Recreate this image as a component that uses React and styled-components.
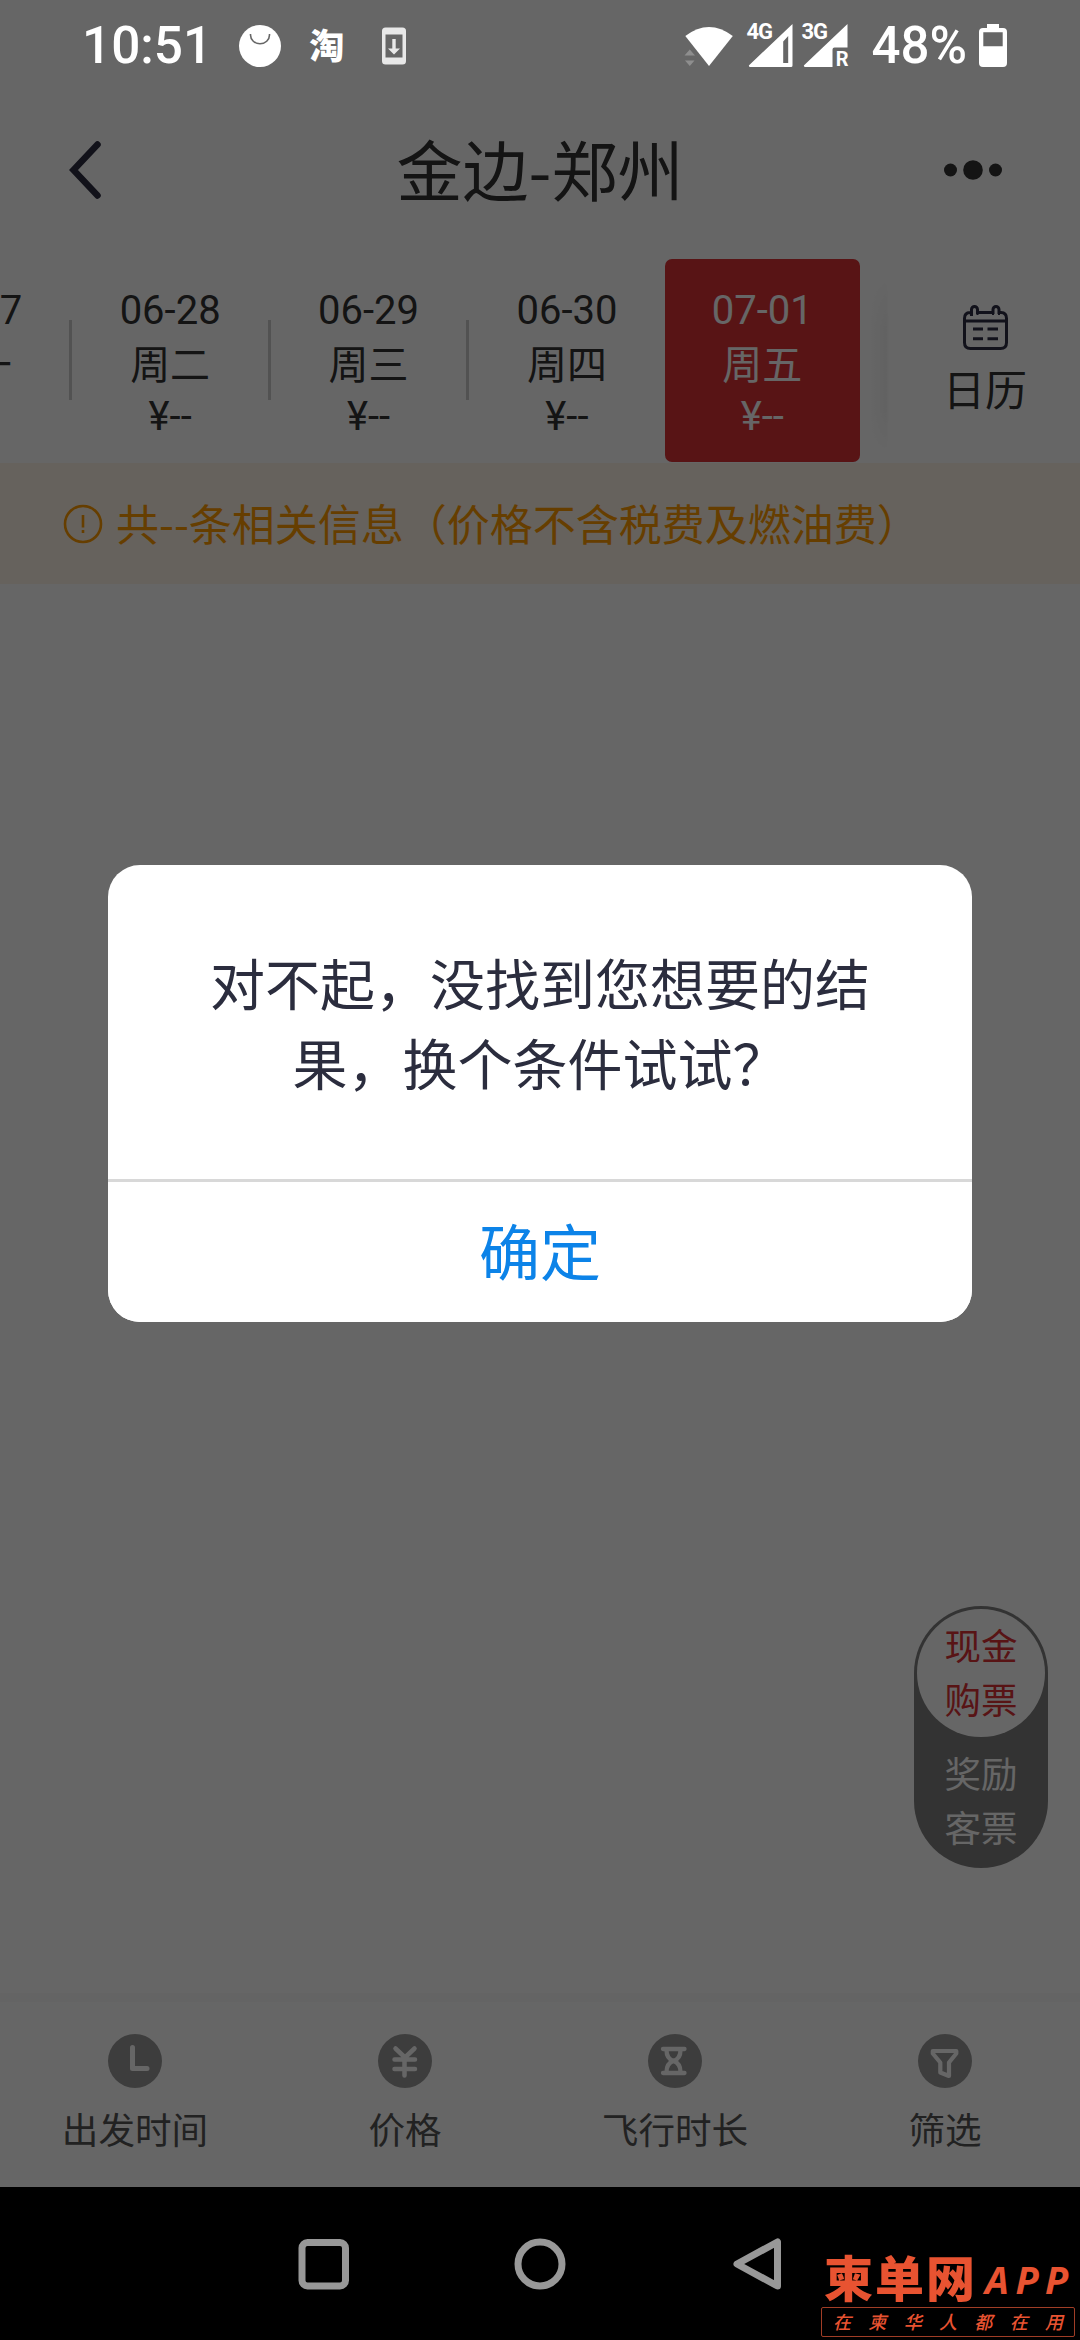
import React from "react";
import styled, { createGlobalStyle } from "styled-components";

const GlobalStyle = createGlobalStyle`
  * {
    box-sizing: border-box;
  }
  body {
    margin: 0;
    background: #000;
  }
`;

const cjk = `"Noto Sans CJK SC", sans-serif`;
const mixed = `Roboto, "Noto Sans CJK SC", sans-serif`;

const Phone = styled.div`
  position: relative;
  display: flex;
  flex-direction: column;
  width: 1080px;
  height: 2340px;
  overflow: hidden;
  background: #fff;
  color: #333;
  font-family: ${cjk};
  svg {
    display: block;
    flex: none;
    overflow: visible;
  }
`;

/* status bar */

const StatusBar = styled.div`
  position: relative;
  z-index: 2;
  display: flex;
  align-items: center;
  height: 88px;
  padding: 3px 73px 0 82px;
  color: #fff;
`;

const StatusText = styled.span`
  font: 500 ${(p) => p.$size || 51}px/60px Roboto, sans-serif;
  margin-left: ${(p) => p.$left || 0}px;
`;

const StatusIcons = styled.div`
  display: flex;
  align-items: center;
  margin-left: ${(p) => p.$left};
`;

const AppGlyph = styled.span`
  margin: 0 38px 4px 28px;
  font: 900 35px/40px ${cjk};
`;

const Signal = styled.div`
  display: grid;
  width: 47px;
  height: 44px;
  margin-left: ${(p) => p.$left}px;
  > * {
    grid-area: 1 / 1;
  }
`;

const SignalLabel = styled.span`
  align-self: ${(p) => (p.$end ? "end" : "start")};
  justify-self: ${(p) => (p.$end ? "end" : "start")};
  margin-top: -5px;
  margin-bottom: -4px;
  font: 700 ${(p) => (p.$end ? 20 : 22)}px/26px Roboto, sans-serif;
  letter-spacing: ${(p) => (p.$end ? 0 : -1)}px;
`;

/* page header */

const Header = styled.header`
  display: grid;
  grid-template-columns: 1fr auto 1fr;
  align-items: center;
  height: 164px;
  padding: 0 77px 0 68px;
  > :last-child {
    justify-self: end;
  }
`;

const Title = styled.h1`
  margin: 0 0 7px;
  padding-left: 9px;
  font-size: 66px;
  font-weight: 400;
  line-height: 80px;
`;

/* date strip */

const Strip = styled.div`
  display: flex;
  height: 211px;
  padding-top: 7px;
`;

const Days = styled.div`
  display: flex;
  width: 860px;
  overflow: hidden;
  justify-content: flex-end;
`;

const Day = styled.div`
  display: flex;
  flex: none;
  flex-direction: column;
  align-items: center;
  width: 195.4px;
  height: 203px;
  padding-top: 27px;
  border-radius: 7px;
  font: 400 40px/50px ${mixed};
  background: ${(p) => (p.$active ? "#dc3236" : "transparent")};
  color: ${(p) => (p.$active ? "#fff" : "#333")};
  span:nth-child(2) {
    padding-top: 4px;
    line-height: 52px;
  }
`;

const Divider = styled.i`
  flex: none;
  width: 3px;
  height: 80px;
  margin-top: 61px;
  background: #ccc;
`;

const StripShade = styled.i`
  width: 29px;
  height: 180px;
  margin-top: 16px;
  background: linear-gradient(90deg, #fff 30%, #f5f5f5 90%, #fff);
  mask-image: linear-gradient(transparent, #000 30%, #000 75%, transparent);
`;

const CalendarButton = styled.div`
  display: flex;
  flex: 1;
  flex-direction: column;
  align-items: center;
  padding: 46px 0 0 1px;
  font-size: 42px;
  line-height: 52px;
  svg {
    margin-bottom: 12px;
  }
`;

const Notice = styled.div`
  display: flex;
  align-items: center;
  gap: 13px;
  height: 121px;
  padding-left: 63px;
  background: #fff4e9;
  color: #ff9c00;
  font-size: 43px;
  line-height: 60px;
`;

const NoticeText = styled.span`
  margin-bottom: 4px;
`;

const Results = styled.main`
  flex: 1;
`;

/* floating ticket switch */

const TicketSwitch = styled.div`
  position: absolute;
  top: 1606px;
  right: 32px;
  display: flex;
  flex-direction: column;
  width: 134px;
  height: 262px;
  padding: 3px;
  border-radius: 67px;
  background: #808080;
`;

const TicketOption = styled.div`
  display: flex;
  flex-direction: column;
  align-items: center;
  justify-content: center;
  height: 128px;
  padding-bottom: 3px;
  border-radius: 50%;
  font-size: 36.5px;
  line-height: 54px;
  background: ${(p) => (p.$active ? "#fff" : "transparent")};
  color: ${(p) => (p.$active ? "#dc3236" : "#fff")};
`;

/* bottom filters */

const FilterBar = styled.footer`
  display: grid;
  grid-template-columns: repeat(4, 1fr);
  height: 194px;
  border-top: 9px solid #fbfbfb;
`;

const Filter = styled.div`
  display: flex;
  flex-direction: column;
  align-items: center;
  padding-top: 32px;
  color: #555;
  font-size: 36.6px;
  line-height: 50px;
  svg {
    margin-bottom: 16px;
  }
`;

const NavBar = styled.nav`
  display: flex;
  align-items: center;
  justify-content: space-between;
  height: 153px;
  padding: 0 297px;
  background: #000;
`;

/* dialog */

const Mask = styled.div`
  position: absolute;
  inset: 0 0 153px;
  display: flex;
  align-items: center;
  justify-content: center;
  background: rgba(0, 0, 0, 0.6);
`;

const Dialog = styled.div`
  width: 864px;
  height: 457px;
  overflow: hidden;
  border-radius: 32px;
  background: #fff;
`;

const Message = styled.p`
  height: 314px;
  margin: 0;
  padding: 76px 101px 0;
  color: #2b2d3e;
  font-size: 55px;
  line-height: 80px;
  text-align: center;
`;

const Confirm = styled.button`
  display: block;
  width: 100%;
  height: 143px;
  padding: 0 0 4px;
  border: 0;
  border-top: 3px solid #d8d8d8;
  background: #fff;
  color: #0c83e8;
  font: 400 61px/80px ${cjk};
`;

/* watermark */

const Watermark = styled.div`
  position: absolute;
  right: 5px;
  bottom: 3px;
  width: 254px;
  color: #e85331;
`;

const Brand = styled.div`
  display: flex;
  align-items: flex-start;
  gap: 8px;
  height: 58px;
  padding-left: 3px;
  white-space: nowrap;
  b {
    margin-top: -2px;
    font: 900 49px/58px ${cjk};
    letter-spacing: 2px;
  }
  em {
    margin-top: 1px;
    font: italic 700 38px/58px "Open Sans", sans-serif;
    letter-spacing: 6.5px;
  }
`;

const Slogan = styled.div`
  display: flex;
  justify-content: space-between;
  height: 30px;
  padding: 0 11px;
  border: 1px solid #a03d26;
  border-radius: 2px;
  font: italic 500 18px/27px ${cjk};
`;

const BagIcon = () => (
  <svg width="42" height="42" viewBox="0 0 42 42">
    <circle cx="21" cy="21" r="21" fill="#fff" />
    <path d="M11.5 9v1a9.5 8.8 0 0 0 19 0V9" fill="none" stroke="#666" strokeWidth="1.6" />
  </svg>
);

const UpdateIcon = () => (
  <svg width="24" height="38" viewBox="0 0 24 38">
    <rect width="24" height="37" y=".5" rx="3.5" fill="#e8e8e8" />
    <path d="M3.5 7.500h17v23h-17z" fill="#666" />
    <path d="M10.300 12h3.400v9.500h4.300l-6 6-6-6h4.300z" fill="#e8e8e8" />
  </svg>
);

const WifiIcon = () => (
  <svg width="48" height="44" viewBox="0 0 48 44">
    <path d="M.3 12Q24-6 47.800 12L24 42z" fill="#fff" />
    <path d="M-.5 31.500 4.800 25.500l5.200 6zM0 36.500h9.500L4.800 42z" fill="#8e8e8e" />
  </svg>
);

const SignalIcon = ({ label, roaming, left }) => (
  <Signal $left={left}>
    <svg width="47" height="44" viewBox="0 0 47 44">
      {roaming ? (
        <path d="M46.500 0v23.500h-13q-2 0-2 2V43H3.500L2.800 41.500z" fill="#fff" />
      ) : (
        <path
          d="M46.500 0v41.500q0 1.500-1.500 1.500H3.500L2.800 41.500zM37.200 17.500V39h5V12z"
          fill="#fff"
          fillRule="evenodd"
        />
      )}
    </svg>
    <SignalLabel>{label}</SignalLabel>
    {roaming && <SignalLabel $end>R</SignalLabel>}
  </Signal>
);

const BatteryIcon = () => (
  <svg width="28" height="44" viewBox="0 0 28 44">
    <path
      d="M8 0h12v4h4q4 0 4 4v31q0 4-4 4H4q-4 0-4-4V8q0-4 4-4h4zM4.300 8.200v14h19.400v-14z"
      fill="#fff"
      fillRule="evenodd"
    />
  </svg>
);

const BackIcon = () => (
  <svg width="34" height="60" viewBox="0 0 34 60">
    <path d="M29.500 4.500 5.500 30 29.500 55.500" fill="none" stroke="#2d2d41" strokeWidth="6.500" strokeLinecap="round" />
  </svg>
);

const MoreIcon = () => (
  <svg width="58" height="20" viewBox="0 0 58 20" fill="#333">
    <circle cx="5.500" cy="10" r="6.500" />
    <circle cx="28" cy="10" r="9.800" />
    <circle cx="50.500" cy="10" r="6.500" />
  </svg>
);

const CalendarIcon = () => (
  <svg width="45" height="45" viewBox="0 0 45 45" fill="none" stroke="#2d2d45" strokeWidth="3">
    <path d="M8.500 11V7.500H7q-5.500 0-5.500 6V37.500q0 6 6 6h30q6 0 6-6V13.500q0-6-5.500-6H36V4.500a3 3 0 0 0-6 0v3H14.500V4.500a3 3 0 0 0-6 0V8.500" />
    <path d="M14.500 7v3M30 7v3M36 7v3" strokeWidth="2" />
    <path d="M2 16h41M10 24h10M24.500 24h10.500M10 33.700h10M24.500 33.700h10.500" />
  </svg>
);

const AlertIcon = () => (
  <svg width="40" height="40" viewBox="0 0 40 40" fill="none" stroke="#ff9c00" strokeWidth="2.600">
    <circle cx="20" cy="20" r="18" />
    <path d="M20 11v12.500M20 26v3" />
  </svg>
);

const glyphs = {
  time: <path d="M24.500 13.500V34.500H39" strokeWidth="5" />,
  price: (
    <path d="M17.500 14.500 27 23.500l9.500-9M16.500 25.500H37M16.500 35H37M26.500 24v17.500" strokeWidth="4.500" />
  ),
  duration: (
    <path
      d="M15 15H36.500M15 39H36.500M18.500 16C18.500 22.500 21 25.500 25.500 27C21 28.500 18.500 32 18.500 38M32.500 16C32.500 22.500 30 25.500 25.500 27C30 28.500 32.500 32 32.500 38"
      strokeWidth="4.300"
    />
  ),
  filter: (
    <path d="M14.800 17H38.300V19.500L31 28.500V42L22.300 38.500V28.500L14.800 19.500z" strokeWidth="4.200" />
  ),
};

const FilterIcon = ({ name }) => (
  <svg width="54" height="54" viewBox="0 0 54 54">
    <circle cx="27" cy="27" r="27" fill="#999" />
    <g fill="none" stroke="#fff" strokeLinecap="round" strokeLinejoin="round">
      {glyphs[name]}
    </g>
  </svg>
);

const days = [
  { date: "06-27", week: "周一" },
  { date: "06-28", week: "周二" },
  { date: "06-29", week: "周三" },
  { date: "06-30", week: "周四" },
  { date: "07-01", week: "周五", active: true },
];

const filters = [
  { icon: "time", label: "出发时间" },
  { icon: "price", label: "价格" },
  { icon: "duration", label: "飞行时长" },
  { icon: "filter", label: "筛选" },
];

export default function App() {
  return (
    <Phone lang="zh-CN">
      <GlobalStyle />
      <StatusBar>
        <StatusText $size={51.3}>10:51</StatusText>
        <StatusIcons $left="27px">
          <BagIcon />
          <AppGlyph>淘</AppGlyph>
          <UpdateIcon />
        </StatusIcons>
        <StatusIcons $left="auto">
          <WifiIcon />
          <SignalIcon label="4G" left={13} />
          <SignalIcon label="3G" left={8} roaming />
          <StatusText $left={23}>48%</StatusText>
          <StatusIcons $left="12px">
            <BatteryIcon />
          </StatusIcons>
        </StatusIcons>
      </StatusBar>

      <Header>
        <BackIcon />
        <Title>金边-郑州</Title>
        <MoreIcon />
      </Header>

      <Strip>
        <Days>
          {days.map((day, i) => (
            <React.Fragment key={day.date}>
              {i > 0 && !day.active && <Divider />}
              <Day $active={day.active}>
                <span>{day.date}</span>
                <span>{day.week}</span>
                <span>¥--</span>
              </Day>
            </React.Fragment>
          ))}
        </Days>
        <StripShade />
        <CalendarButton>
          <CalendarIcon />
          日历
        </CalendarButton>
      </Strip>

      <Notice>
        <AlertIcon />
        <NoticeText>共--条相关信息（价格不含税费及燃油费）</NoticeText>
      </Notice>

      <Results />

      <TicketSwitch>
        <TicketOption $active>
          <span>现金</span>
          <span>购票</span>
        </TicketOption>
        <TicketOption>
          <span>奖励</span>
          <span>客票</span>
        </TicketOption>
      </TicketSwitch>

      <FilterBar>
        {filters.map((f) => (
          <Filter key={f.icon}>
            <FilterIcon name={f.icon} />
            {f.label}
          </Filter>
        ))}
      </FilterBar>

      <NavBar>
        <svg width="54" height="54" viewBox="0 0 54 54" fill="none" stroke="#989898" strokeWidth="7">
          <rect x="5" y="5.500" width="43.500" height="43.500" rx="5.500" />
        </svg>
        <svg width="54" height="54" viewBox="0 0 54 54" fill="none" stroke="#989898" strokeWidth="7">
          <circle cx="27" cy="27" r="22" />
        </svg>
        <svg width="54" height="54" viewBox="0 0 54 54" fill="none" stroke="#989898" strokeWidth="7">
          <path d="M48.500 5v44L8 27z" strokeLinejoin="round" />
        </svg>
      </NavBar>

      <Mask>
        <Dialog>
          <Message>对不起，没找到您想要的结果，换个条件试试？</Message>
          <Confirm>确定</Confirm>
        </Dialog>
      </Mask>

      <Watermark>
        <Brand>
          <b>柬单网</b>
          <em>APP</em>
        </Brand>
        <Slogan>
          {[..."在柬华人都在用"].map((c, i) => (
            <span key={i}>{c}</span>
          ))}
        </Slogan>
      </Watermark>
    </Phone>
  );
}
